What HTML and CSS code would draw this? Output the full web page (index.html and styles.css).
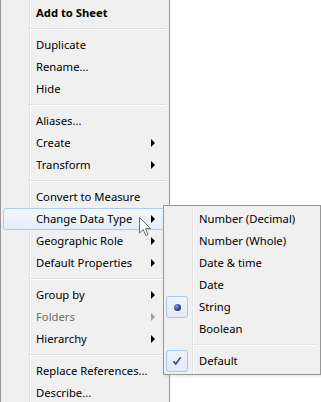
FILE: index.html
```html
<!DOCTYPE html>
<html lang="en">
<head>
    <meta charset="UTF-8">
    <title>Field Context Menu</title>
    <link rel="stylesheet" href="styles.css">
</head>
<body>
    <div class="menu main-menu">
        <div class="item bold">Add to Sheet</div>
        <div class="sep"></div>
        <div class="item">Duplicate</div>
        <div class="item">Rename...</div>
        <div class="item">Hide</div>
        <div class="sep"></div>
        <div class="item">Aliases...</div>
        <div class="item sub">Create</div>
        <div class="item sub">Transform</div>
        <div class="sep"></div>
        <div class="item">Convert to Measure</div>
        <div class="item sub active">Change Data Type</div>
        <div class="item sub">Geographic Role</div>
        <div class="item sub">Default Properties</div>
        <div class="sep"></div>
        <div class="item sub">Group by</div>
        <div class="item sub disabled">Folders</div>
        <div class="item sub">Hierarchy</div>
        <div class="sep"></div>
        <div class="item">Replace References...</div>
        <div class="item">Describe...</div>
    </div>

    <div class="menu sub-menu">
        <div class="item">Number (Decimal)</div>
        <div class="item">Number (Whole)</div>
        <div class="item">Date &amp; time</div>
        <div class="item">Date</div>
        <div class="item checked"><span class="mark"><span class="dot"></span></span>String</div>
        <div class="item">Boolean</div>
        <div class="sep"></div>
        <div class="item checked">
            <span class="mark">
                <svg width="10" height="10" viewBox="0 0 10 10">
                    <path d="M1.5 5.2 L3.8 8 L8.6 1.4" fill="none" stroke="#2a3c9e" stroke-width="1.6"/>
                </svg>
            </span>Default
        </div>
    </div>

    <svg class="cursor" width="13" height="20" viewBox="0 0 13 20">
        <path d="M0.5 0.5 L0.5 16 L4.2 12.4 L6.8 18.6 L9 17.6 L6.5 11.6 L11.6 11.6 Z" fill="#fff" stroke="#6b6b6b" stroke-width="1"/>
    </svg>
</body>
</html>
```

FILE: styles.css
```css
body {
    margin: 0;
    background: #ffffff;
    font-family: 'Noto Sans', sans-serif;
    font-size: 11.25px;
    color: #000;
    position: relative;
    height: 402px;
    overflow: hidden;
}
.menu {
    background-color: #f0f0f0;
    background-image: linear-gradient(to right, transparent 28px, #e2e3e3 28px, #e2e3e3 29px, #ffffff 29px, #ffffff 30px, transparent 30px);
    border: 1px solid #979797;
    padding: 2px;
    box-sizing: border-box;
}
.main-menu {
    width: 170px;
    margin-top: -1px;
}
.sub-menu {
    position: absolute;
    left: 163px;
    top: 205px;
    width: 158px;
    box-shadow: 2px 2px 2px rgba(0, 0, 0, 0.08);
}
.item {
    height: 22px;
    line-height: 22px;
    padding-left: 32px;
    padding-right: 11px;
    display: flex;
    align-items: center;
    white-space: nowrap;
    position: relative;
    box-sizing: border-box;
    border: 1px solid transparent;
    border-radius: 3px;
}
.bold {
    font-weight: bold;
}
.sub::after {
    content: '';
    margin-left: auto;
    border-left: 4px solid #000;
    border-top: 4px solid transparent;
    border-bottom: 4px solid transparent;
}
.disabled {
    color: #6d6d6d;
}
.disabled::after {
    border-left-color: #a0a0a0;
}
.active {
    background: linear-gradient(#f2f7fd, #e3edfa);
    border-color: #aecbef;
}
.sep {
    height: 0;
    margin: 4px 1px 4px 27px;
    border-top: 1px solid #e0e0e0;
    border-bottom: 1px solid #ffffff;
}
.mark {
    position: absolute;
    left: -1px;
    top: -1px;
    width: 22px;
    height: 22px;
    box-sizing: border-box;
    border: 1px solid #a9c6ec;
    border-radius: 3px;
    background: linear-gradient(#eef3fb, #e2eaf7);
    display: flex;
    align-items: center;
    justify-content: center;
}
.dot {
    width: 7px;
    height: 7px;
    border-radius: 50%;
    background: radial-gradient(circle at 35% 35%, #8e9ee0, #2b3a94 60%, #1c2670);
}
.cursor {
    position: absolute;
    left: 139px;
    top: 217px;
}
```
